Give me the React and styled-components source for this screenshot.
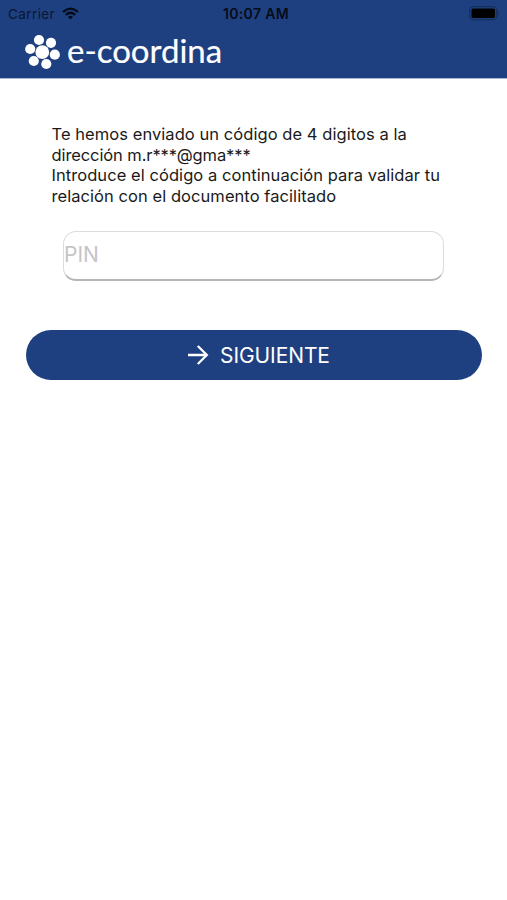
import React from "react";
import styled, { createGlobalStyle } from "styled-components";

const GlobalStyle = createGlobalStyle`
  * { box-sizing: border-box; }
  body { margin: 0; background: #fff; font-family: Inter, "Liberation Sans", sans-serif; }
`;

const Screen = styled.div`
  min-height: 900px;
  background: #fff;
`;

const Header = styled.header`
  height: 79px;
  background: #1f4080;
  border-bottom: 1px solid #a9b8d2;
`;

const StatusBar = styled.div`
  height: 27px;
  display: grid;
  grid-template-columns: 1fr auto 1fr;
  align-items: center;
  padding: 0 7px 0 8px;
  color: #050b18;
`;

const Carrier = styled.div`
  display: flex;
  align-items: center;
  gap: 7px;
  font-size: 13.5px;
  letter-spacing: 0.4px;
  color: #0a1630;
`;

const Clock = styled.div`
  font-size: 14px;
  font-weight: 600;
  letter-spacing: 0.35px;
  padding-left: 4px;
`;

const Battery = styled.svg`
  justify-self: end;
`;

const Brand = styled.div`
  display: flex;
  align-items: center;
  height: 49px;
  padding-left: 25px;
  gap: 7px;
  color: #fff;
`;

const BrandName = styled.span`
  font-family: Lato, "Open Sans", sans-serif;
  font-size: 33px;
  line-height: 44px;
  letter-spacing: 0;
  padding-bottom: 4px;
  -webkit-text-stroke: 0.2px #fff;
`;

const Form = styled.main`
  padding: 45px 26px 0;
`;

const Message = styled.p`
  margin: 0 0 24px 25.5px;
  font-size: 16.5px;
  line-height: 20.7px;
  letter-spacing: 0.06px;
  color: #1a1a1a;
  white-space: nowrap;
`;

const MaskedAddress = styled.span`
  letter-spacing: -0.1px;
`;

const PinInput = styled.input`
  display: block;
  width: 381px;
  height: 50px;
  margin: 0 0 49px 37px;
  padding: 0 0 1px;
  border: 1px solid #dcdcdc;
  border-bottom: 2px solid #b2b6b6;
  border-radius: 13px;
  background: #fff;
  font-family: inherit;
  font-size: 21px;
  outline: none;
  &::placeholder { color: #c5c5c7; opacity: 1; }
`;

const NextButton = styled.button`
  display: flex;
  align-items: center;
  justify-content: center;
  gap: 11px;
  width: 456px;
  height: 50px;
  padding: 0 0 0 10px;
  border: 0;
  border-radius: 25px;
  background: #1f4080;
  color: #fff;
  font-family: inherit;
  font-size: 21px;
`;

const ButtonLabel = styled.span`
  letter-spacing: -0.1px;
  padding-top: 2px;
`;

function WifiIcon() {
  return (
    <svg width="17" height="13" viewBox="0 0 17 13" fill="none" stroke="#050b18" strokeWidth="2.3">
      <path d="M1 5Q8.500-1.700 16 5" />
      <path d="M3.800 7.800Q8.500 3.700 13.200 7.800" />
      <path d="M6 9.800Q8.500 7.800 11 9.800L8.500 12.500Z" fill="#050b18" stroke="none" />
    </svg>
  );
}

function FlowerLogo() {
  return (
    <svg width="35" height="36" viewBox="0 0 35 36" fill="#fff">
      <circle cx="17.300" cy="18.100" r="6.900" />
      <circle cx="14" cy="6" r="5.100" />
      <circle cx="26" cy="8.800" r="5.100" />
      <circle cx="29.800" cy="20.700" r="5.100" />
      <circle cx="21.300" cy="30" r="5.100" />
      <circle cx="8.800" cy="27" r="5.100" />
      <circle cx="5.200" cy="15" r="5.100" />
    </svg>
  );
}

export default function App() {
  return (
    <Screen>
      <GlobalStyle />
      <Header>
        <StatusBar>
          <Carrier>Carrier <WifiIcon /></Carrier>
          <Clock>10:07 AM</Clock>
          <Battery width="31" height="15" viewBox="0 0 31 15">
            <rect x="0.700" y="0.700" width="27" height="13" rx="3.500" fill="none" stroke="#15305f" strokeWidth="1.300" />
            <rect x="2.500" y="2.500" width="23.500" height="9.500" rx="1.500" fill="#000" />
            <path d="M29 5Q31 7.200 29 9.500Z" fill="#15305f" />
          </Battery>
        </StatusBar>
        <Brand>
          <FlowerLogo />
          <BrandName>e-coordina</BrandName>
        </Brand>
      </Header>
      <Form>
        <Message>
          Te hemos enviado un código de 4 digitos a la<br />
          <MaskedAddress>dirección m.r***@gma***</MaskedAddress><br />
          Introduce el código a continuación para validar tu<br />
          relación con el documento facilitado
        </Message>
        <PinInput placeholder="PIN" aria-label="PIN" />
        <NextButton type="button">
          <svg width="21" height="20" viewBox="0 0 21 20" fill="none" stroke="#fff" strokeWidth="2.300">
            <path d="M0 10H18M9.800 1L18.800 10L9.800 19" />
          </svg>
          <ButtonLabel>SIGUIENTE</ButtonLabel>
        </NextButton>
      </Form>
    </Screen>
  );
}
